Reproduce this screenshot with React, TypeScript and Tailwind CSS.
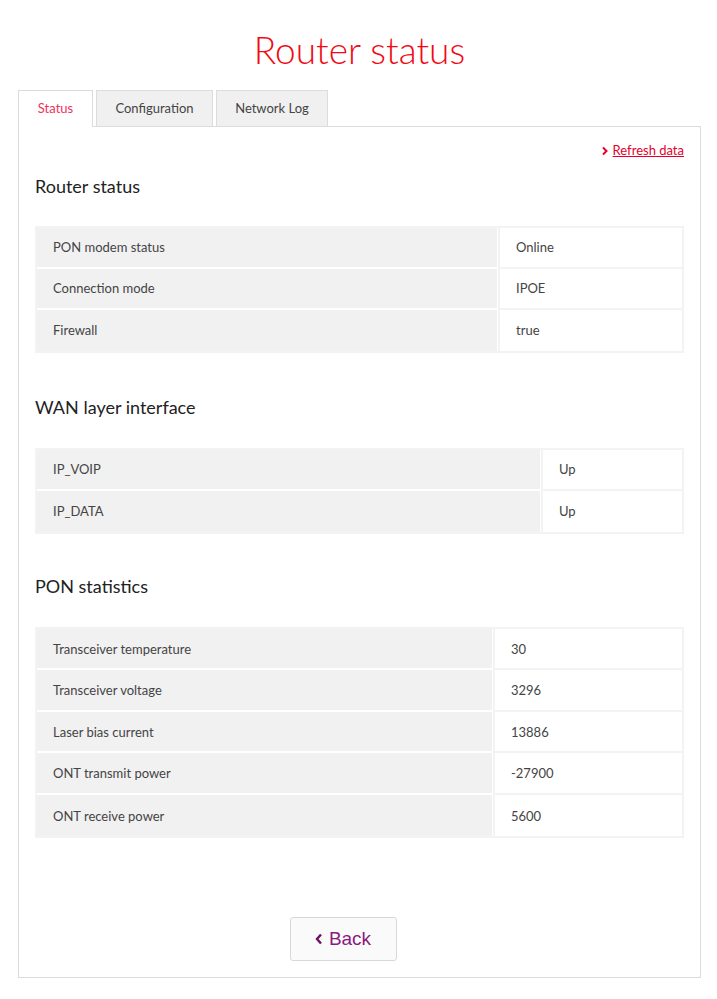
const font = { fontFamily: 'Lato, "Noto Sans", sans-serif' }

type Row = { label: string; value: string }

function StatusTable({ rows, valueWidth, rowHeight = 'h-[41px]' }: { rows: Row[]; valueWidth: string; rowHeight?: string }) {
  return (
    <div className="border-2 border-[#f2f3f5]">
      {rows.map((row, i) => {
        const last = i === rows.length - 1
        return (
          <div key={i} className={`flex ${rowHeight}`}>
            <div
              className={`flex-1 flex items-center pl-4 pt-[2px] bg-[#f1f1f1] text-[13px] text-[#444] border-r border-white ${last ? '' : 'border-b-2 border-b-white'}`}
            >
              {row.label}
            </div>
            <div
              className={`${valueWidth} flex items-center pl-4 pt-[2px] bg-white text-[13px] text-[#444] border-l-2 border-[#f2f3f5] ${last ? '' : 'border-b-2'}`}
            >
              {row.value}
            </div>
          </div>
        )
      })}
    </div>
  )
}

export default function App() {
  const routerRows = [
    { label: 'PON modem status', value: 'Online' },
    { label: 'Connection mode', value: 'IPOE' },
    { label: 'Firewall', value: 'true' },
  ]
  const wanRows = [
    { label: 'IP_VOIP', value: 'Up' },
    { label: 'IP_DATA', value: 'Up' },
  ]
  const ponRows = [
    { label: 'Transceiver temperature', value: '30' },
    { label: 'Transceiver voltage', value: '3296' },
    { label: 'Laser bias current', value: '13886' },
    { label: 'ONT transmit power', value: '-27900' },
    { label: 'ONT receive power', value: '5600' },
  ]
  return (
    <div className="min-h-[999px] bg-white pl-[18px] pr-[16px] pb-[22px]" style={font}>
      <h1 className="pt-[26px] h-[90px] text-center text-[37px] leading-[48px] font-light text-[#f00a14]">
        Router status
      </h1>

      {/* Tabs */}
      <div className="flex items-end gap-[3px]">
        <div className="w-[75px] h-[37px] -mb-px relative z-10 flex items-center justify-center bg-white border border-b-0 border-[#dcdcdc] text-[13px] text-[#f0325a]">
          Status
        </div>
        <div className="w-[117px] h-[36px] flex items-center justify-center bg-[#f0f0f0] border border-b-0 border-[#dcdcdc] text-[13px] text-[#444]">
          Configuration
        </div>
        <div className="w-[112px] h-[36px] flex items-center justify-center bg-[#f0f0f0] border border-b-0 border-[#dcdcdc] text-[13px] text-[#444]">
          Network Log
        </div>
      </div>

      {/* Panel */}
      <div className="border border-[#dcdcdc] px-4 pt-[14px] pb-4">
        <div className="flex justify-end items-center gap-[4px] text-[13px] text-[#e4002b]">
          <svg width="8" height="10" viewBox="0 0 8 10">
            <path d="M2 1.5 L5.5 5 L2 8.5" fill="none" stroke="#e4002b" strokeWidth="2" />
          </svg>
          <span className="underline">Refresh data</span>
        </div>

        <h2 className="mt-[12px] text-[18px] text-[#222]">Router status</h2>
        <div className="mt-[26px]">
          <StatusTable rows={routerRows} valueWidth="w-[184px]" />
        </div>

        <h2 className="mt-[41px] text-[18px] text-[#222]">WAN layer interface</h2>
        <div className="mt-[27px]">
          <StatusTable rows={wanRows} valueWidth="w-[141px]" />
        </div>

        <h2 className="mt-[39px] text-[18px] text-[#222]">PON statistics</h2>
        <div className="mt-[27px]">
          <StatusTable rows={ponRows} valueWidth="w-[189px]" rowHeight="h-[41.6px]" />
        </div>

        <div className="flex justify-center pr-[33px] mt-[79px]">
          <button
            className="w-[107px] h-[44px] flex items-center justify-center gap-[6px] rounded-[3px] border border-[#d8d8d8] bg-[#fafafa] text-[19px] text-[#8a1a7e]"
            style={{ fontFamily: '"Liberation Sans", Arial, sans-serif' }}
          >
            <svg width="8" height="12" viewBox="0 0 8 12">
              <path d="M6 1.5 L2 6 L6 10.5" fill="none" stroke="#6e1162" strokeWidth="2.4" />
            </svg>
            Back
          </button>
        </div>
      </div>
    </div>
  )
}
